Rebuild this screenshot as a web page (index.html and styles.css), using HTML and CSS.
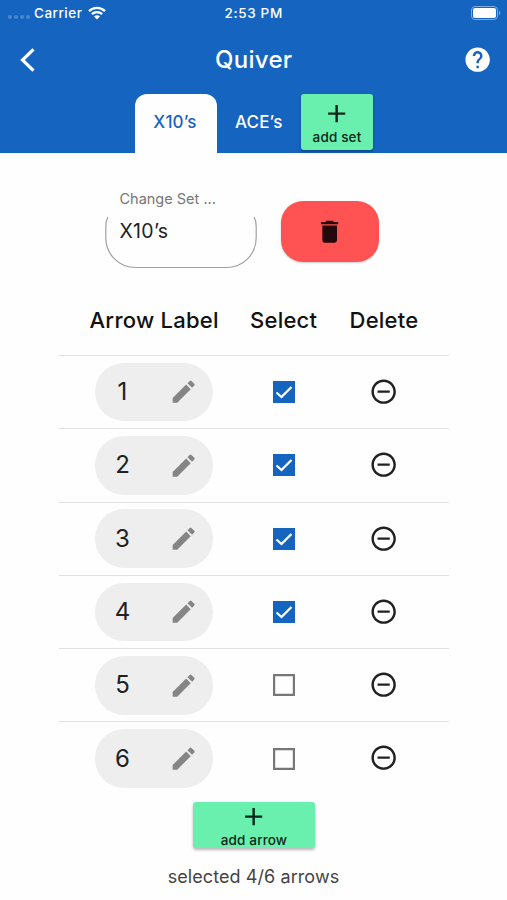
FILE: index.html
```html
<!DOCTYPE html>
<html lang="en">
<head>
<meta charset="utf-8">
<title>Quiver</title>
<link rel="stylesheet" href="styles.css">
</head>
<body>
<svg class="sprite" aria-hidden="true">
  <symbol id="add" viewBox="0 0 24 24"><path d="M19 13h-6v6h-2v-6H5v-2h6V5h2v6h6v2z"/></symbol>
  <symbol id="edit" viewBox="0 0 24 24"><path d="M3 17.25V21h3.75L17.81 9.94l-3.75-3.75L3 17.25zM20.71 7.04a1 1 0 0 0 0-1.41l-2.34-2.34a1 1 0 0 0-1.41 0l-1.83 1.83 3.75 3.75 1.83-1.83z"/></symbol>
  <symbol id="trash" viewBox="0 0 24 24"><path d="M6 19c0 1.1.9 2 2 2h8c1.100 0 2-.9 2-2V7H6v12zM19 4h-3.500l-1-1h-5l-1 1H5v2h14V4z"/></symbol>
  <symbol id="minus" viewBox="0 0 24 24"><path d="M7 11v2h10v-2H7zm5-9C6.480 2 2 6.480 2 12s4.480 10 10 10 10-4.480 10-10S17.520 2 12 2zm0 18c-4.410 0-8-3.590-8-8s3.590-8 8-8 8 3.590 8 8-3.590 8-8 8z"/></symbol>
  <symbol id="help" viewBox="0 0 24 24"><path d="M12 2C6.480 2 2 6.480 2 12s4.480 10 10 10 10-4.480 10-10S17.520 2 12 2zm1 17h-2v-2h2v2zm2.070-7.750l-.9.920C13.450 12.900 13 13.500 13 15h-2v-.5c0-1.100.450-2.100 1.170-2.830l1.240-1.260c.370-.360.590-.860.590-1.410 0-1.100-.9-2-2-2s-2 .9-2 2H8c0-2.210 1.790-4 4-4s4 1.790 4 4c0 .880-.360 1.680-.930 2.250z"/></symbol>
  <symbol id="checked" viewBox="0 0 22 22"><path class="box" d="M0 0h22v22H0z"/><path class="tick" d="M3.500 11.500L8.500 16 18.500 6"/></symbol>
  <symbol id="unchecked" viewBox="0 0 22 22"><path class="outline" d="M1.100 1.100h19.800v19.800H1.100z"/></symbol>
</svg>

<header class="header">
  <div class="status">
    <div class="carrier">
      <span class="signal"><i></i><i></i><i></i><i></i></span>
      <span class="carrier-name">Carrier</span>
      <svg class="wifi" viewBox="0 0 18 14"><path class="arc" d="M1 5.200a11.500 11.500 0 0 1 16 0M3.900 8.200a7.400 7.400 0 0 1 10.200 0"/><path d="M9 13.600l-3-3a4.300 4.300 0 0 1 6 0z"/></svg>
    </div>
    <span class="time">2:53 PM</span>
    <svg class="battery" viewBox="0 0 30 14"><rect class="shell" x=".5" y=".5" width="26" height="13" rx="3.500"/><rect x="2" y="2" width="23" height="10" rx="2"/><path class="tip" d="M28 5c1.700.5 1.700 3.500 0 4z"/></svg>
  </div>
  <div class="bar">
    <svg class="back" viewBox="0 0 15 24"><path d="M13.500 1.300L2.500 12l11 10.700"/></svg>
    <h1 class="title">Quiver</h1>
    <svg class="icon help"><use href="#help"/></svg>
  </div>
  <nav class="tabs">
    <a class="tab active"><span>X10’s</span></a>
    <a class="tab other"><span>ACE’s</span></a>
    <button class="add add-set"><svg class="icon"><use href="#add"/></svg><span>add set</span></button>
  </nav>
</header>

<main>
  <section class="set">
    <div class="field">
      <span class="label">Change Set ...</span>
      <span class="value">X10’s</span>
      <svg class="frame" viewBox="0 0 152 53"><path d="M2.800 1C1.400 4 .8 7 .8 11v10.500c0 17 13 30 30 30h90.400c17 0 30-13 30-30V11c0-4-.6-7-2-10"/></svg>
    </div>
    <button class="remove-set"><svg class="icon"><use href="#trash"/></svg></button>
  </section>

  <section class="table">
    <div class="row head"><span class="h-label">Arrow Label</span><span class="h-select">Select</span><span class="h-delete">Delete</span></div>
    <div class="row"><div class="pill"><span class="num">1</span><svg class="icon"><use href="#edit"/></svg></div><svg class="check"><use href="#checked"/></svg><svg class="icon minus"><use href="#minus"/></svg></div>
    <div class="row"><div class="pill"><span class="num">2</span><svg class="icon"><use href="#edit"/></svg></div><svg class="check"><use href="#checked"/></svg><svg class="icon minus"><use href="#minus"/></svg></div>
    <div class="row"><div class="pill"><span class="num">3</span><svg class="icon"><use href="#edit"/></svg></div><svg class="check"><use href="#checked"/></svg><svg class="icon minus"><use href="#minus"/></svg></div>
    <div class="row"><div class="pill"><span class="num">4</span><svg class="icon"><use href="#edit"/></svg></div><svg class="check"><use href="#checked"/></svg><svg class="icon minus"><use href="#minus"/></svg></div>
    <div class="row"><div class="pill"><span class="num">5</span><svg class="icon"><use href="#edit"/></svg></div><svg class="check"><use href="#unchecked"/></svg><svg class="icon minus"><use href="#minus"/></svg></div>
    <div class="row"><div class="pill"><span class="num">6</span><svg class="icon"><use href="#edit"/></svg></div><svg class="check"><use href="#unchecked"/></svg><svg class="icon minus"><use href="#minus"/></svg></div>
  </section>

  <button class="add add-arrow"><svg class="icon"><use href="#add"/></svg><span>add arrow</span></button>
  <p class="summary">selected 4/6 arrows</p>
</main>
</body>
</html>
```
FILE: styles.css
```css
* { box-sizing: border-box; }
body {
  margin: 0;
  height: 900px;
  overflow: hidden;
  background: #fefefe;
  color: #212121;
  font-family: Inter, "Liberation Sans", sans-serif;
}
svg { display: block; flex: none; fill: currentColor; }
button { border: 0; padding: 0; font: inherit; color: inherit; }
.sprite { position: absolute; width: 0; height: 0; }
.icon { width: 29.3px; height: 29.3px; }

.header { height: 152.500px; background: #1565c0; color: #fff; }
.status {
  display: grid;
  grid-template-columns: 216.500px auto 1fr;
  align-items: center;
  height: 26px;
  padding: 0 6px 0 8px;
  font-size: 13.500px;
  font-weight: 500;
  line-height: 26px;
}
.carrier { display: flex; align-items: center; }
.signal { display: flex; gap: 2px; width: 26px; padding-top: 8px; }
.signal i { width: 4px; height: 4px; border-radius: 50%; background: #4a88d0; }
.carrier-name { width: 54px; letter-spacing: .5px; }
.wifi { width: 18px; height: 14px; }
.wifi .arc { fill: none; stroke: #fff; stroke-width: 2.300; }
.time { letter-spacing: .65px; }
.battery { justify-self: end; width: 30px; height: 14px; }
.battery .shell { fill: none; stroke: #7faadd; }
.battery .tip { fill: #7faadd; }

.bar {
  display: grid;
  grid-template-columns: 195px auto 1fr;
  align-items: center;
  height: 68px;
  padding: 0 15px 0 20px;
}
.back { width: 15px; height: 24px; }
.back path { fill: none; stroke: #fff; stroke-width: 3.200; }
.title { margin: 0; font-size: 24px; font-weight: 500; line-height: 32px; letter-spacing: .3px; }
.help { justify-self: end; }

.tabs { display: flex; height: 58.500px; padding-left: 134.500px; font-size: 17px; font-weight: 500; }
.tab { display: flex; justify-content: center; width: 82px; padding-top: 17px; line-height: 22px; letter-spacing: .15px; }
.active { padding-right: 1px; background: #fefefe; color: #1565c0; border-radius: 12px 12px 0 0; }
.other { width: 84.500px; }
.add {
  display: flex;
  flex-direction: column;
  align-items: center;
  border-radius: 3px;
  background: #69f0ae;
  color: #0b2619;
  font-size: 13.500px;
  font-weight: 500;
  box-shadow: 0 2px 3px rgba(0, 0, 0, .28);
}
.add span { line-height: 16px; letter-spacing: .15px; }
.add-set { width: 72px; height: 56px; padding-top: 5px; }
.add-set span { margin-top: 1px; }

.set { display: flex; gap: 24px; height: 134.500px; padding: 34px 0 0 104.500px; }
.field { display: flex; flex-direction: column; position: relative; width: 152px; height: 82px; padding-left: 15px; }
.label { font-size: 14.500px; line-height: 24px; color: #777; }
.value { margin-top: 8px; font-size: 19.500px; line-height: 24px; letter-spacing: .3px; }
.frame { position: absolute; left: 0; top: 29px; width: 152px; height: 53px; }
.frame path { fill: none; stroke: #a0a0a0; stroke-width: 1.200; }
.remove-set {
  display: flex;
  align-items: center;
  justify-content: center;
  width: 98px;
  height: 61px;
  margin-top: 14.500px;
  border-radius: 22px;
  background: #ff5252;
  color: #24080c;
  box-shadow: 0 1px 2px rgba(0, 0, 0, .22);
}

.table { width: 390px; margin-left: 59px; }
.row {
  display: grid;
  grid-template-columns: 119px 22px 30px;
  column-gap: 59px 75px;
  column-gap: 59px;
  align-items: center;
  height: 73.300px;
  padding-left: 35.500px;
  border-top: 1.300px solid #e2e2e2;
}
.head {
  display: flex;
  gap: 0;
  height: 68px;
  padding: 0 0 2px 30.500px;
  border: 0;
  font-size: 22px;
  font-weight: 500;
  letter-spacing: .25px;
  color: #111;
}
.h-label { width: 160.500px; }
.h-select { width: 99.500px; }
.pill {
  display: flex;
  align-items: center;
  gap: 32px;
  width: 118.500px;
  height: 58.500px;
  border-radius: 29.250px;
  background: #eee;
}
.pill .icon { color: #858585; }
.num { width: 28px; margin-left: 14px; text-align: center; font-size: 24px; line-height: 30px; }
.check { width: 22px; height: 22px; }
.box { fill: #1565c0; }
.tick { fill: none; stroke: #fff; stroke-width: 2.300; }
.outline { fill: none; stroke: #777; stroke-width: 2.200; }
.minus { margin: -1px 0 0 15px; }

.add-arrow { width: 122px; height: 46.500px; margin: 7px 0 0 193px; }
.add-arrow span { margin-top: 1px; }
.summary { margin: 15px 0 0; text-align: center; font-size: 18px; line-height: 28px; letter-spacing: .08px; color: #444; }
```
